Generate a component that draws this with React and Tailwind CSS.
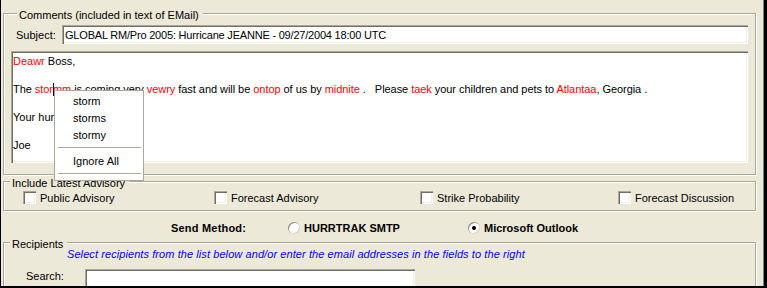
const GROUP = 'flex flex-col w-[753px] border border-[#aca899] shadow-[inset_1px_1px_0_#fff,1px_1px_0_#fff]'
const LEGEND = 'self-start -mt-[6px] ml-[6px] pl-[2px] pr-[4px] h-[14px] leading-[14px] bg-[#ece9d8] whitespace-nowrap'
const SUNKEN = 'bg-white shadow-[inset_1px_1px_0_#aca899,inset_2px_2px_0_#716f64,inset_-1px_-1px_0_#fff,inset_-2px_-2px_0_#f1efe2]'

function Red({ children }) {
  return <span className="text-[#ff0000]">{children}</span>
}

function Checkbox({ label, width }) {
  return (
    <div className={`flex items-center gap-[4px] h-[13px] ${width}`}>
      <span className={`w-[13px] h-[13px] shrink-0 ${SUNKEN}`} />
      <span className="leading-[14px] whitespace-nowrap">{label}</span>
    </div>
  )
}

function Radio({ label, checked, width }) {
  return (
    <div className={`flex items-center gap-[4px] h-[14px] ${width}`}>
      <span className="w-[12px] h-[12px] shrink-0 rounded-full bg-white flex items-center justify-center shadow-[inset_1px_1px_0_#8e8b7c,inset_-1px_-1px_0_#d8d5c6]">
        {checked && <span className="w-[4px] h-[4px] rounded-full bg-black" />}
      </span>
      <span className="font-bold whitespace-nowrap">{label}</span>
    </div>
  )
}

function SpellMenu() {
  return (
    <div className="absolute left-[53px] top-[90px] z-10 w-[90px] h-[91px] bg-white border border-[#aca899] pt-[2px] text-black">
      <div className="h-[17px] leading-[17px] pl-[18px]">storm</div>
      <div className="h-[17px] leading-[17px] pl-[18px]">storms</div>
      <div className="h-[17px] leading-[17px] pl-[18px]">stormy</div>
      <div className="pt-[3px] pb-[5px] ml-[3px] mr-[2px]">
        <div className="h-px bg-[#aca899]" />
      </div>
      <div className="h-[17px] leading-[17px] pl-[18px]">Ignore All</div>
      <div className="pt-[3px] ml-[3px] mr-[2px]">
        <div className="h-px bg-[#aca899]" />
      </div>
    </div>
  )
}

export default function App() {
  return (
    <div className="relative w-[767px] h-[288px] overflow-hidden bg-[#ece9d8] border-l border-r-[3px] border-b-2 border-black shadow-[inset_-1px_0_0_#808080] pl-[2px] pt-[13px] flex flex-col font-['Liberation_Sans',Arial,sans-serif] text-[11px] leading-[14px] text-black">
      {/* Comments */}
      <div className={`${GROUP} px-[7px] pb-[11px]`}>
        <span className={LEGEND}>Comments (included in text of EMail)</span>
        <div className="flex items-center mt-[3px] h-[19px] pl-[5px]">
          <span className="w-[46px] shrink-0">Subject:</span>
          <div className={`flex-1 h-[19px] flex items-center pl-[3px] whitespace-nowrap tracking-[-0.2px] ${SUNKEN}`}>
            GLOBAL RM/Pro 2005: Hurricane JEANNE - 09/27/2004 18:00 UTC
          </div>
        </div>
        <div className={`mt-[7px] h-[112px] pt-[3px] px-[2px] whitespace-pre ${SUNKEN}`}>
          <div className="h-[14px]"><Red>Deawr</Red> Boss,</div>
          <div className="h-[14px]" />
          <div className="h-[14px] tracking-[-0.05px]">
            The <Red>stor</Red>
            <span className="inline-block w-px -mr-px h-[13px] bg-black align-[-3px]" />
            <Red>mm</Red> is coming very <Red>vewry</Red> fast and will be <Red>ontop</Red> of us by <Red>midnite</Red> .   Please <Red>taek</Red> your children and pets to <Red>Atlantaa</Red>, Georgia .
          </div>
          <div className="h-[14px]" />
          <div className="h-[14px]">Your hurricane pal,</div>
          <div className="h-[14px]" />
          <div className="h-[14px]">Joe</div>
        </div>
      </div>

      {/* Include Latest Advisory */}
      <div className={`${GROUP} mt-[6px] pb-[6px]`}>
        <span className={LEGEND}>Include Latest Advisory</span>
        <div className="flex mt-[1px] pl-[19px]">
          <Checkbox label="Public Advisory" width="w-[191px]" />
          <Checkbox label="Forecast Advisory" width="w-[206px]" />
          <Checkbox label="Strike Probability" width="w-[198px]" />
          <Checkbox label="Forecast Discussion" width="w-[120px]" />
        </div>
      </div>

      {/* Send method */}
      <div className="flex items-center mt-[10px] h-[14px] pl-[168px]">
        <span className="w-[117px] font-bold tracking-[0.2px]">Send Method:</span>
        <Radio label="HURRTRAK SMTP" width="w-[180px]" />
        <Radio label="Microsoft Outlook" checked width="w-[150px]" />
      </div>

      {/* Recipients */}
      <div className={`${GROUP} mt-[7px] h-[60px]`}>
        <span className={LEGEND}>Recipients</span>
        <div className="-mt-[4px] pl-[63px] italic text-[#0000ff] whitespace-nowrap tracking-[0.08px]">
          Select recipients from the list below and/or enter the email addresses in the fields to the right
        </div>
        <div className="flex items-start mt-[8px] pl-[22px]">
          <span className="w-[59px] shrink-0">Search:</span>
          <div className={`w-[330px] h-[20px] ${SUNKEN}`} />
        </div>
      </div>

      <SpellMenu />
    </div>
  )
}
